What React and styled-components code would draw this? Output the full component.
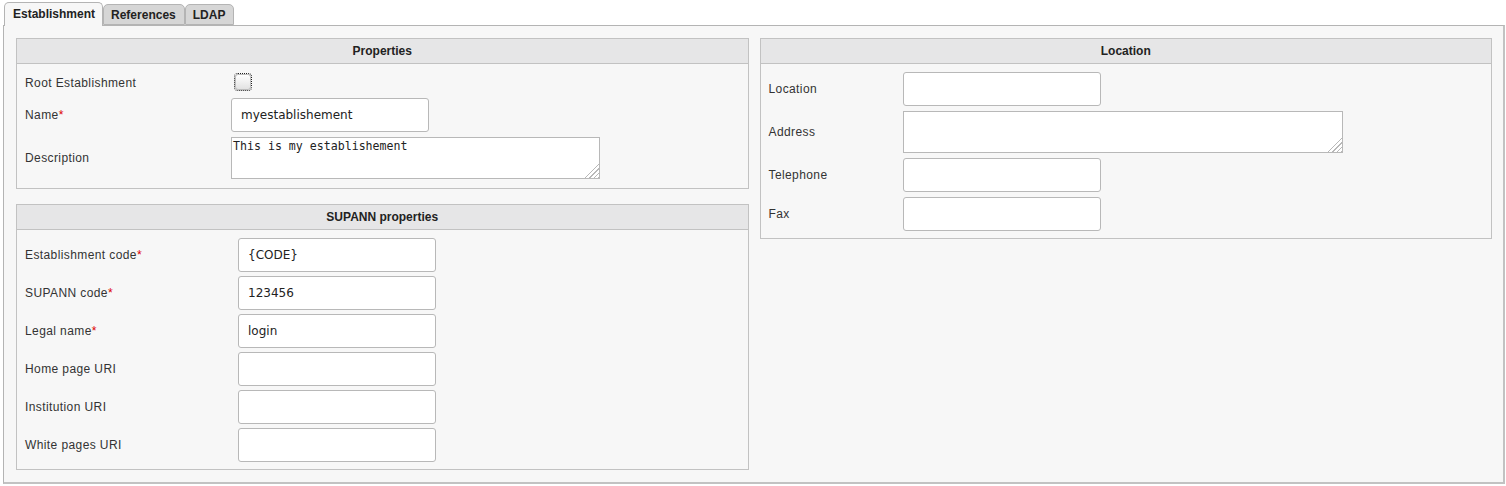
import React from "react";
import styled, { createGlobalStyle } from "styled-components";

const GlobalStyle = createGlobalStyle`
  body {
    margin: 0;
    background: #ffffff;
    font-family: "Liberation Sans", Arial, sans-serif;
  }
`;

const Page = styled.div`
  padding: 3px 1px 0 3px;
`;

const TabBar = styled.div`
  display: flex;
  align-items: flex-end;
  padding-left: 1px;
  height: 23px;
  position: relative;
  z-index: 1;
  margin-bottom: -1px;
`;

const Tab = styled.div`
  box-sizing: border-box;
  height: ${(p) => (p.$active ? "24px" : "21px")};
  padding: ${(p) => (p.$active ? "3px 7px 0 8px" : "2px 8px 0 7px")};
  border: 1px solid #b4b4b4;
  border-bottom: ${(p) => (p.$active ? "none" : "1px solid #b4b4b4")};
  border-radius: 5px 5px 0 0;
  background: ${(p) => (p.$active ? "#f7f7f7" : "#d6d6d6")};
  margin-bottom: ${(p) => (p.$active ? "0" : "1px")};
  font-size: 12px;
  font-weight: bold;
  color: #222;
  line-height: 16px;
  cursor: pointer;
`;

const Panel = styled.div`
  box-sizing: border-box;
  border: 1px solid #b4b4b4;
  border-right: 2px solid #c2c2c2;
  border-bottom: 2px solid #c2c2c2;
  background: #f7f7f7;
  padding: 12px 11px 12px 12px;
  display: grid;
  grid-template-columns: 1fr 1fr;
  column-gap: 11px;
  align-items: start;
`;

const Column = styled.div`
  display: flex;
  flex-direction: column;
  gap: 15px;
`;

const Fieldset = styled.section`
  border: 1px solid #c2c2c2;
  background: #f7f7f7;
`;

const Legend = styled.div`
  height: 24px;
  line-height: 24px;
  background: #e6e6e7;
  border-bottom: 1px solid #c2c2c2;
  text-align: center;
  font-size: 12px;
  font-weight: bold;
  color: #222;
`;

const Body = styled.div`
  display: grid;
  grid-template-columns: ${(p) => p.$labelWidth}px 1fr;
  row-gap: ${(p) => p.$gap}px;
  padding: 8px 8px ${(p) => p.$bottom}px 8px;
  align-items: center;
`;

const Label = styled.label`
  font-size: 12px;
  color: #333;
  letter-spacing: 0.4px;
`;

const Star = styled.span`
  color: #d00;
`;

const TextInput = styled.input`
  box-sizing: border-box;
  width: 198px;
  height: 34px;
  border: 1px solid #b8b8b8;
  border-radius: 3px;
  background: #fff;
  padding: 0 9px;
  font-family: "DejaVu Sans", sans-serif;
  font-size: 12px;
  color: #222;
  outline: none;
`;

const TextArea = styled.textarea`
  box-sizing: border-box;
  display: block;
  width: ${(p) => p.$width}px;
  height: 42px;
  border: 1px solid #b8b8b8;
  border-radius: 0;
  background: #fff;
  padding: 1px 1px;
  margin: 0;
  font-family: "DejaVu Sans Mono", monospace;
  font-size: 11.6px;
  color: #222;
  outline: none;

  &::-webkit-resizer {
    background:
      linear-gradient(135deg, #fff 50%, transparent 50%),
      repeating-linear-gradient(135deg, transparent 0 2px, #b8b8b8 2px 3px);
  }
`;

const CheckRow = styled.div`
  height: 21px;
  display: flex;
  align-items: center;
`;

const Checkbox = styled.span`
  box-sizing: border-box;
  display: inline-block;
  width: 16px;
  height: 16px;
  margin-left: 4px;
  margin-top: -2px;
  outline: 1px dotted #222;
  border: 1px solid #bcbcbc;
  border-radius: 3px;
  background: linear-gradient(#ffffff, #e2e2e2);
`;

const Field = ({ label, required, children }) => (
  <>
    <Label>
      {label}
      {required && <Star>*</Star>}
    </Label>
    <div>{children}</div>
  </>
);

const supann = [
  { label: "Establishment code", required: true, value: "{CODE}" },
  { label: "SUPANN code", required: true, value: "123456" },
  { label: "Legal name", required: true, value: "login" },
  { label: "Home page URI", value: "" },
  { label: "Institution URI", value: "" },
  { label: "White pages URI", value: "" },
];

const App = () => {
  return (
    <Page>
      <GlobalStyle />
      <TabBar>
        <Tab $active>Establishment</Tab>
        <Tab>References</Tab>
        <Tab>LDAP</Tab>
      </TabBar>
      <Panel>
        <Column>
          <Fieldset>
            <Legend>Properties</Legend>
            <Body $labelWidth={206} $gap={5} $bottom={9}>
              <Label>Root Establishment</Label>
              <CheckRow>
                <Checkbox />
              </CheckRow>
              <Field label="Name" required>
                <TextInput defaultValue="myestablishement" />
              </Field>
              <Field label="Description">
                <TextArea $width={369} defaultValue="This is my establishement" />
              </Field>
            </Body>
          </Fieldset>
          <Fieldset>
            <Legend>SUPANN properties</Legend>
            <Body $labelWidth={213} $gap={4} $bottom={7}>
              {supann.map((f) => (
                <Field key={f.label} label={f.label} required={f.required}>
                  <TextInput defaultValue={f.value} />
                </Field>
              ))}
            </Body>
          </Fieldset>
        </Column>
        <Column>
          <Fieldset>
            <Legend>Location</Legend>
            <Body $labelWidth={134} $gap={5} $bottom={7}>
              <Field label="Location">
                <TextInput />
              </Field>
              <Field label="Address">
                <TextArea $width={440} />
              </Field>
              <Field label="Telephone">
                <TextInput />
              </Field>
              <Field label="Fax">
                <TextInput />
              </Field>
            </Body>
          </Fieldset>
        </Column>
      </Panel>
    </Page>
  );
};

export default App;
